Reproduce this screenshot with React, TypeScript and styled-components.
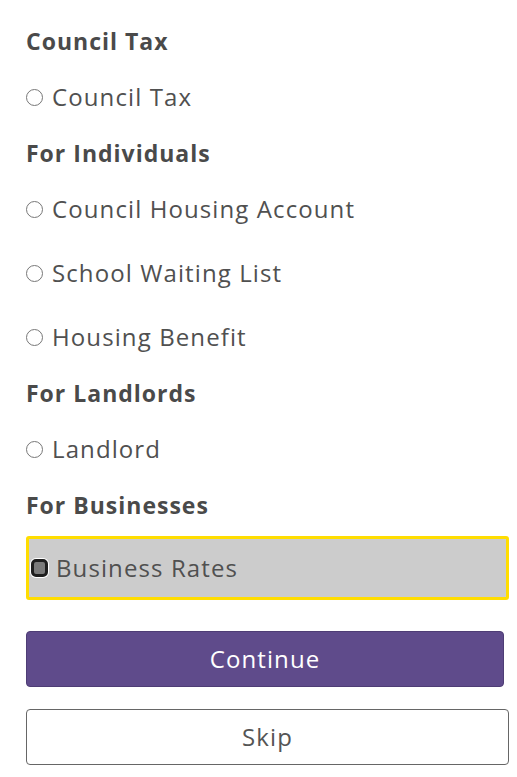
import styled, { createGlobalStyle } from 'styled-components';

const GlobalStyle = createGlobalStyle`
  body {
    margin: 0;
    background: #ffffff;
    font-family: "Open Sans", "Liberation Sans", sans-serif;
    color: #4d4d4d;
  }
`;

const Form = styled.form`
  display: flex;
  flex-direction: column;
  padding: 17px 8px 0 26px;
`;

const GroupTitle = styled.h3`
  margin: 0;
  height: 48px;
  display: flex;
  align-items: center;
  font-size: 23px;
  font-weight: 700;
  letter-spacing: 1px;
  color: #4a4a4a;
`;

const Option = styled.label<{ $selected?: boolean }>`
  display: flex;
  align-items: center;
  gap: 9px;
  box-sizing: border-box;
  height: 64px;
  padding-bottom: 2px;
  font-size: 24px;
  letter-spacing: 1.1px;
  color: #505050;
  cursor: pointer;
  ${({ $selected }) =>
    $selected &&
    `
    margin-top: 7px;
    padding-left: 2px;
    gap: 8px;
    background: #cccccc;
    border: 3px solid #ffdd00;
    border-radius: 3px;
  `}
`;

const Radio = styled.input.attrs({ type: 'radio' })`
  appearance: none;
  margin: 2px 0 0;
  flex: none;
  box-sizing: border-box;
  width: 17px;
  height: 17px;
  border: 1px solid #777777;
  border-radius: 50%;
  background: #ffffff;

  &:checked {
    width: 17px;
    height: 18px;
    border: 3px solid #1e1e1e;
    border-radius: 5px;
    background: #7a7a7a;
    box-shadow: 0 0 0 1px #ffffff;
  }
`;

const Actions = styled.div`
  display: flex;
  flex-direction: column;
  gap: 22px;
  margin-top: 31px;
`;

const Button = styled.button<{ $primary?: boolean }>`
  box-sizing: border-box;
  height: 56px;
  padding-bottom: 3px;
  border-radius: 4px;
  font-family: inherit;
  font-size: 24px;
  letter-spacing: 1.1px;
  cursor: pointer;
  background: ${({ $primary }) => ($primary ? '#5f4b8b' : '#ffffff')};
  color: ${({ $primary }) => ($primary ? '#ffffff' : '#555555')};
  border: 1px solid ${({ $primary }) => ($primary ? '#4e3d75' : '#666666')};
  margin-right: ${({ $primary }) => ($primary ? '5px' : '0')};
`;

const groups = [
  { title: 'Council Tax', options: ['Council Tax'] },
  {
    title: 'For Individuals',
    options: ['Council Housing Account', 'School Waiting List', 'Housing Benefit'],
  },
  { title: 'For Landlords', options: ['Landlord'] },
  { title: 'For Businesses', options: ['Business Rates'] },
];

const selected = 'Business Rates';

export default function App() {
  return (
    <>
      <GlobalStyle />
      <Form onSubmit={(e) => e.preventDefault()}>
        {groups.map((g) => (
          <div key={g.title}>
            <GroupTitle>{g.title}</GroupTitle>
            {g.options.map((o) => (
              <Option key={o} $selected={o === selected}>
                <Radio name="service" value={o} defaultChecked={o === selected} />
                {o}
              </Option>
            ))}
          </div>
        ))}
        <Actions>
          <Button type="submit" $primary>
            Continue
          </Button>
          <Button type="button">Skip</Button>
        </Actions>
      </Form>
    </>
  );
}
